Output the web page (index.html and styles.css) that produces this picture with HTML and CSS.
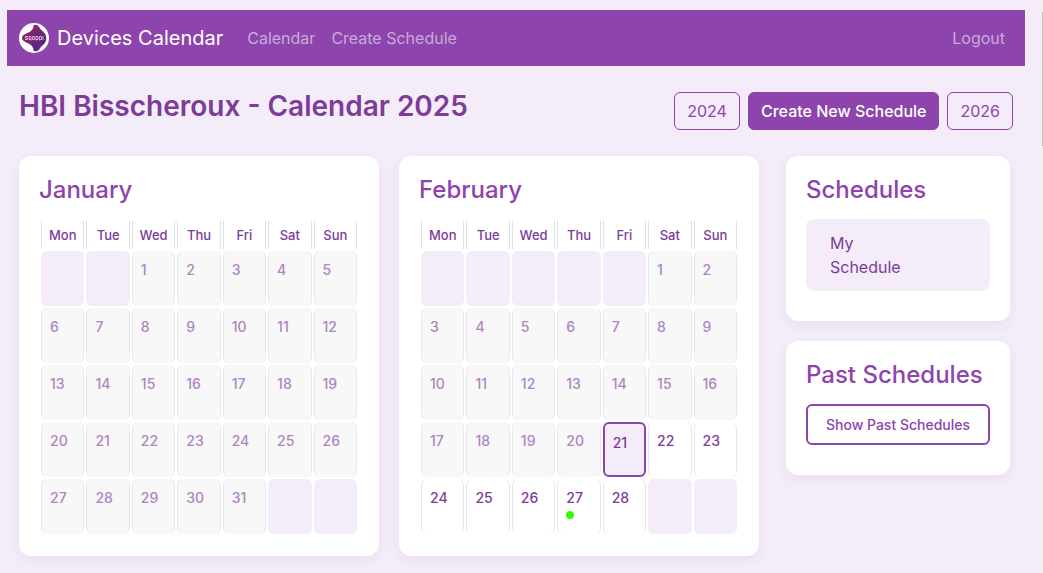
FILE: index.html
```html
<!DOCTYPE html>
<html lang="en">
<head>
<meta charset="utf-8">
<meta name="viewport" content="width=device-width, initial-scale=1">
<title>Devices Calendar</title>
<link rel="stylesheet" href="styles.css">
</head>
<body>
<div class="page">
  <nav class="navbar">
    <a class="brand" href="#">
      <svg class="logo" viewBox="0 0 30 30" aria-hidden="true">
        <defs><linearGradient id="mark" x1="0" x2="1" y1="0" y2="1"><stop offset="0" stop-color="#a0205f"/><stop offset=".5" stop-color="#74257a"/><stop offset="1" stop-color="#4a2590"/></linearGradient></defs>
        <circle cx="15" cy="15" r="15" fill="#fff"/>
        <path d="M14.500 2.500C16 1 18.500 1.500 20 4C21.500 7 25 8.500 26.500 11.500C27.500 14 27.500 17 26.500 19C25 22 22 23 20.500 26C19 28.500 16.500 29 14.500 27.500C14.500 22 10 21 6.500 19C3.500 17.500 3 16.500 3 15C3 13.500 4 12 6.500 11C10 9 14.500 8 14.500 2.500Z" fill="url(#mark)"/>
        <g fill="none" stroke="#e3cfe6" stroke-width=".8"><path d="M9 13.500H6.500V15H8.500V16.500H6M12 16.500H10V13.500H12V17.500M13.500 13.500H15.500V16.500H13.500ZM17 17.500V13.500H19V16.500H17M20.500 17.500V13.500H22.500V16.500H20.500M24 13V17"/></g>
      </svg>
      Devices Calendar
    </a>
    <a class="nav-link" href="#">Calendar</a>
    <a class="nav-link" href="#">Create Schedule</a>
    <a class="nav-link nav-end" href="#">Logout</a>
  </nav>
  <header class="header">
    <h1 class="title">HBI Bisscheroux - Calendar 2025</h1>
    <div class="actions">
      <a class="btn" href="#">2024</a>
      <button class="btn btn-primary" type="button">Create New Schedule</button>
      <a class="btn" href="#">2026</a>
    </div>
  </header>
  <main class="content">
    <div class="months">
      <section class="card">
        <h2 class="card-title">January</h2>
        <table class="calendar">
          <thead><tr><th>Mon</th><th>Tue</th><th>Wed</th><th>Thu</th><th>Fri</th><th>Sat</th><th>Sun</th></tr></thead>
          <tbody>
            <tr><td class="empty"></td><td class="empty"></td><td class="past">1</td><td class="past">2</td><td class="past">3</td><td class="past">4</td><td class="past">5</td></tr>
            <tr><td class="past">6</td><td class="past">7</td><td class="past">8</td><td class="past">9</td><td class="past">10</td><td class="past">11</td><td class="past">12</td></tr>
            <tr><td class="past">13</td><td class="past">14</td><td class="past">15</td><td class="past">16</td><td class="past">17</td><td class="past">18</td><td class="past">19</td></tr>
            <tr><td class="past">20</td><td class="past">21</td><td class="past">22</td><td class="past">23</td><td class="past">24</td><td class="past">25</td><td class="past">26</td></tr>
            <tr><td class="past">27</td><td class="past">28</td><td class="past">29</td><td class="past">30</td><td class="past">31</td><td class="empty"></td><td class="empty"></td></tr>
          </tbody>
        </table>
      </section>
      <section class="card">
        <h2 class="card-title">February</h2>
        <table class="calendar">
          <thead><tr><th>Mon</th><th>Tue</th><th>Wed</th><th>Thu</th><th>Fri</th><th>Sat</th><th>Sun</th></tr></thead>
          <tbody>
            <tr><td class="empty"></td><td class="empty"></td><td class="empty"></td><td class="empty"></td><td class="empty"></td><td class="past">1</td><td class="past">2</td></tr>
            <tr><td class="past">3</td><td class="past">4</td><td class="past">5</td><td class="past">6</td><td class="past">7</td><td class="past">8</td><td class="past">9</td></tr>
            <tr><td class="past">10</td><td class="past">11</td><td class="past">12</td><td class="past">13</td><td class="past">14</td><td class="past">15</td><td class="past">16</td></tr>
            <tr><td class="past">17</td><td class="past">18</td><td class="past">19</td><td class="past">20</td><td class="today">21</td><td>22</td><td>23</td></tr>
            <tr><td>24</td><td>25</td><td>26</td><td>27<span class="dot"></span></td><td>28</td><td class="empty"></td><td class="empty"></td></tr>
          </tbody>
        </table>
      </section>
    </div>
    <aside class="sidebar">
      <section class="card side-card">
        <h2 class="card-title">Schedules</h2>
        <a class="schedule" href="#">My<br>Schedule</a>
      </section>
      <section class="card side-card">
        <h2 class="card-title">Past Schedules</h2>
        <button class="show-past" type="button">Show Past Schedules</button>
      </section>
    </aside>
  </main>
</div>
<div class="scroll-track"><div class="scroll-thumb"></div></div>
</body>
</html>
```
FILE: styles.css
```css
* { box-sizing: border-box; }
body {
  margin: 0;
  background: #f4ecf8;
  color: #7d3c98;
  font: 16px/24px Inter, "Liberation Sans", sans-serif;
}
a { color: inherit; text-decoration: none; }
h1, h2 { margin: 0; font-weight: 500; }
button { font-family: inherit; cursor: pointer; }
.page { padding: 10px 18px 17px 7px; }

.navbar {
  display: flex;
  align-items: center;
  gap: 16px;
  height: 56px;
  padding: 0 20px 0 12px;
  background: #8e44ad;
}
.brand {
  display: flex;
  align-items: center;
  gap: 8px;
  margin-right: 8px;
  color: #fff;
  font-size: 20px;
}
.logo { width: 30px; height: 30px; }
.nav-link { color: rgba(255, 255, 255, .55); }
.nav-end { margin-left: auto; }

.header {
  display: flex;
  justify-content: space-between;
  padding: 26px 12px;
}
.title { font-size: 28px; line-height: 28px; font-weight: 600; }
.actions { display: flex; gap: 8px; }
.btn {
  height: 38px;
  padding: 6px 12px;
  border: 1px solid #8e44ad;
  border-radius: 6px;
  background: transparent;
  color: #8e44ad;
  font-size: 16px;
  line-height: 24px;
}
.btn-primary { background: #8e44ad; color: #fff; font-weight: 500; }

.content {
  display: flex;
  align-items: flex-start;
  gap: 27px;
  padding: 0 15px 0 12px;
}
.months {
  flex: 1;
  display: grid;
  grid-template-columns: 1fr 1fr;
  gap: 20px;
}
.sidebar {
  flex: 0 0 224px;
  display: grid;
  gap: 20px;
}
.card {
  padding: 20px;
  border-radius: 12px;
  background: #fff;
  box-shadow: 0 4px 12px rgba(142, 68, 173, .08);
}
.side-card { padding-bottom: 30px; }
.card-title {
  margin-bottom: 16px;
  color: #8e44ad;
  font-size: 24px;
  line-height: 27px;
}

.calendar {
  width: 100%;
  table-layout: fixed;
  border-collapse: separate;
  border-spacing: 2px;
}
.calendar th {
  height: 28px;
  padding: 0;
  border: solid #dee2e6;
  border-width: 0 1px;
  font-size: 13px;
  line-height: 20px;
  font-weight: 500;
}
.calendar td {
  height: 55px;
  padding: 8px;
  border: solid #e9e6ee;
  border-width: 0 1px;
  border-radius: 6px;
  vertical-align: top;
  font-size: 14px;
  line-height: 22px;
  font-weight: 500;
}
.calendar .past { background: #f8f8f8; color: #af84c1; }
.calendar .empty { background: #f4ecf8; border-color: #f4ecf8; }
.calendar .today { border: 2px solid #8e44ad; background: #f4ecf8; }
.dot {
  display: block;
  width: 8px;
  height: 8px;
  margin-top: 2px;
  border-radius: 50%;
  background: #3f0;
}

.schedule {
  display: block;
  padding: 12px 24px;
  border-radius: 8px;
  background: #f4ecf8;
}
.show-past {
  display: block;
  width: 100%;
  padding: 8px;
  border: 2px solid #8e44ad;
  border-radius: 6px;
  background: #fff;
  color: #8e44ad;
  font-size: 14px;
  line-height: 21px;
  font-weight: 500;
}

.scroll-track {
  position: fixed;
  top: 0;
  right: 0;
  bottom: 0;
  width: 3px;
  padding: 12px 0 0 2px;
  background: #f1f1f1;
}
.scroll-thumb { height: 134px; background: #c1c1c1; }
```
